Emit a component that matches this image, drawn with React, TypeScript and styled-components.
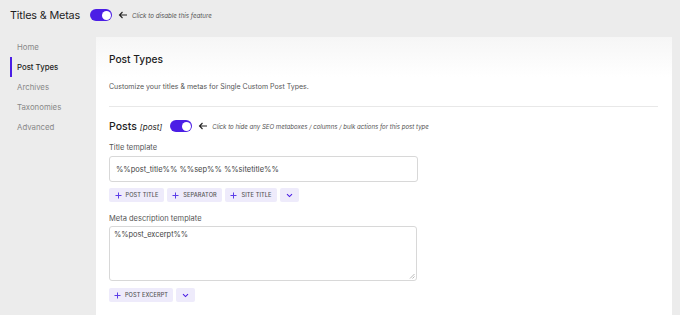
import React from "react";
import styled, { createGlobalStyle } from "styled-components";

const Global = createGlobalStyle`
  html, body { margin: 0; padding: 0; background: #ececec; }
  body { font-family: Inter, "Noto Sans", sans-serif; color: #1e1e1e; }
  * { box-sizing: border-box; }
`;

const Page = styled.div`
  width: 680px;
  height: 315px;
  overflow: hidden;
  background: #ececec;
`;

const Header = styled.div`
  display: flex;
  align-items: center;
  height: 30px;
  padding: 0 0 0 10px;
`;

const Title = styled.h1`
  margin: 0 10px 0 0;
  font-size: 10.8px;
  font-weight: 400;
  letter-spacing: -0.15px;
  color: #1e1e1e;
`;

const Toggle = styled.span`
  position: relative;
  display: inline-block;
  width: 22px;
  height: 12px;
  border-radius: 6px;
  background: #4b1ee5;
  flex: none;
  &::after {
    content: "";
    position: absolute;
    right: 1.5px;
    top: 1.5px;
    width: 9px;
    height: 9px;
    border-radius: 50%;
    background: #fff;
  }
`;

const Hint = styled.span<{ $size: number }>`
  display: inline-flex;
  align-items: center;
  gap: 4px;
  margin-left: 6px;
  font-size: ${(p) => p.$size}px;
  font-style: italic;
  color: #555;
`;

const Body = styled.div`
  display: flex;
  padding-top: 7px;
`;

const Sidebar = styled.nav`
  width: 96px;
  flex: none;
  display: flex;
  flex-direction: column;
`;

const NavItem = styled.div<{ $active?: boolean }>`
  height: 20px;
  display: flex;
  align-items: center;
  padding-left: ${(p) => (p.$active ? "5px" : "7px")};
  margin-left: 10px;
  font-size: 7.8px;
  color: ${(p) => (p.$active ? "#1e1e1e" : "#888")};
  font-weight: ${(p) => (p.$active ? 500 : 400)};
  border-left: ${(p) => (p.$active ? "2px solid #4b1ee5" : "none")};
`;

const Card = styled.main`
  width: 576px;
  height: 290px;
  background: linear-gradient(#f6f6f6 0px, #ffffff 40px);
  padding: 14px 13px 0 13px;
`;

const CardTitle = styled.h2`
  margin: 0;
  height: 16px;
  line-height: 16px;
  font-size: 10.2px;
  font-weight: 500;
`;

const Desc = styled.p`
  margin: 15px 0 0;
  font-size: 7px;
  color: #555;
  line-height: 10px;
`;

const Divider = styled.hr`
  border: none;
  border-top: 1px solid #e8e8e8;
  margin: 14px 0 0;
  width: 549px;
`;

const SectionHead = styled.div`
  display: flex;
  align-items: center;
  margin-top: 12px;
  height: 14px;
`;

const SectionTitle = styled.h3`
  margin: 0 8px 0 0;
  font-size: 10.5px;
  font-weight: 500;
  em {
    font-size: 8px;
    font-weight: 400;
    margin-left: 3px;
  }
`;

const Label = styled.div<{ $mt: number }>`
  margin-top: ${(p) => p.$mt}px;
  font-size: 7.5px;
  color: #555;
  line-height: 10px;
`;

const Input = styled.div`
  margin-top: 3px;
  width: 309px;
  height: 26px;
  border: 1px solid #d8d8d8;
  border-radius: 3px;
  padding: 0 6px;
  display: flex;
  align-items: center;
  font-size: 7.5px;
  color: #444;
`;

const TextArea = styled.div`
  position: relative;
  margin-top: 2px;
  width: 308px;
  height: 55px;
  border: 1px solid #d8d8d8;
  border-radius: 3px;
  padding: 3px 4px;
  font-size: 7.4px;
  color: #444;
`;

const Grip = styled.svg`
  position: absolute;
  right: 1px;
  bottom: 1px;
`;

const Buttons = styled.div<{ $mt: number }>`
  display: flex;
  gap: 3px;
  margin-top: ${(p) => p.$mt}px;
`;

const Btn = styled.div<{ $w: number }>`
  width: ${(p) => p.$w}px;
  height: 14px;
  border-radius: 2px;
  background: #eeebfb;
  display: flex;
  align-items: center;
  justify-content: center;
  gap: 4px;
  font-size: 5.6px;
  font-weight: 500;
  color: #555;
  text-transform: uppercase;
  letter-spacing: 0.1px;
`;

const Arrow = () => (
  <svg width="10" height="8" viewBox="0 0 10 8">
    <path d="M9 4H1.5M4.5 1L1.5 4L4.5 7" stroke="#222" strokeWidth="1.1" fill="none" />
  </svg>
);

const Plus = () => (
  <svg width="7" height="7" viewBox="0 0 7 7">
    <path d="M3.5 0.5V6.5M0.5 3.5H6.5" stroke="#5b3de8" strokeWidth="1" />
  </svg>
);

const Chevron = () => (
  <svg width="7" height="5" viewBox="0 0 7 5">
    <path d="M1 1.2L3.5 3.6L6 1.2" stroke="#4b1ee5" strokeWidth="1.1" fill="none" />
  </svg>
);

export default function App() {
  return (
    <Page>
      <Global />
      <Header>
        <Title>Titles &amp; Metas</Title>
        <Toggle />
        <Hint $size={6.2}>
          <Arrow />
          Click to disable this feature
        </Hint>
      </Header>
      <Body>
        <Sidebar>
          <NavItem>Home</NavItem>
          <NavItem $active>Post Types</NavItem>
          <NavItem>Archives</NavItem>
          <NavItem>Taxonomies</NavItem>
          <NavItem>Advanced</NavItem>
        </Sidebar>
        <Card>
          <CardTitle>Post Types</CardTitle>
          <Desc>Customize your titles &amp; metas for Single Custom Post Types.</Desc>
          <Divider />
          <SectionHead>
            <SectionTitle>
              Posts<em>[post]</em>
            </SectionTitle>
            <Toggle />
            <Hint $size={6.1}>
              <Arrow />
              Click to hide any SEO metaboxes / columns / bulk actions for this post type
            </Hint>
          </SectionHead>
          <Label $mt={10}>Title template</Label>
          <Input>%%post_title%% %%sep%% %%sitetitle%%</Input>
          <Buttons $mt={6}>
            <Btn $w={55}><Plus />Post Title</Btn>
            <Btn $w={55}><Plus />Separator</Btn>
            <Btn $w={52}><Plus />Site Title</Btn>
            <Btn $w={19}><Chevron /></Btn>
          </Buttons>
          <Label $mt={12}>Meta description template</Label>
          <TextArea>
            %%post_excerpt%%
            <Grip width="6" height="6" viewBox="0 0 6 6">
              <path d="M5.5 1L1 5.5M5.5 3.5L3.5 5.5" stroke="#999" strokeWidth="0.7" />
            </Grip>
          </TextArea>
          <Buttons $mt={7}>
            <Btn $w={64}><Plus />Post Excerpt</Btn>
            <Btn $w={19}><Chevron /></Btn>
          </Buttons>
        </Card>
      </Body>
    </Page>
  );
}
